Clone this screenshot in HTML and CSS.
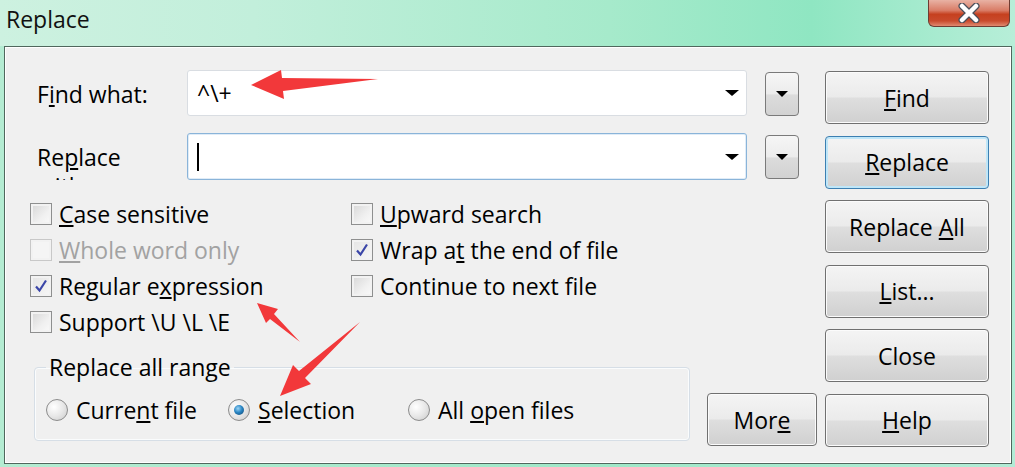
FILE: index.html
```html
<!DOCTYPE html>
<html>
<head>
<meta charset="utf-8">
<link rel="stylesheet" href="styles.css">
</head>
<body>
<div class="window">
  <div class="titlebar">
    <span class="title">Replace</span>
    <div class="close-btn">
      <svg width="30" height="20" viewBox="0 0 30 20">
        <path d="M8 3 L22 17 M22 3 L8 17" stroke="#4a4f5a" stroke-width="7" stroke-linecap="round"/>
        <path d="M8 3 L22 17 M22 3 L8 17" stroke="#ffffff" stroke-width="4.5" stroke-linecap="round"/>
      </svg>
    </div>
  </div>
  <div class="client">
    <div class="main">
      <div class="field-row">
        <label class="field-label">F<u>i</u>nd what:</label>
        <div class="combo"><span class="combo-text">^\+</span><span class="tri"></span></div>
        <div class="drop-btn"><span class="tri"></span></div>
      </div>
      <div class="field-row row2">
        <label class="field-label clip"><span class="wrap">Re<u>p</u>lace with:</span></label>
        <div class="combo focus"><span class="caret"></span><span class="tri"></span></div>
        <div class="drop-btn"><span class="tri"></span></div>
      </div>
      <div class="options">
        <div class="col">
          <div class="opt"><span class="box"></span><span><u>C</u>ase sensitive</span></div>
          <div class="opt disabled"><span class="box"></span><span><u>W</u>hole word only</span></div>
          <div class="opt"><span class="box checked"><svg width="14" height="14" viewBox="0 0 14 14"><path d="M2 7.5 L5.5 11.5 L12 1.5" fill="none" stroke="#3b46a8" stroke-width="2.2"/></svg></span><span>Regular e<u>x</u>pression</span></div>
          <div class="opt"><span class="box"></span><span>Support \U \L \E</span></div>
        </div>
        <div class="col">
          <div class="opt"><span class="box"></span><span><u>U</u>pward search</span></div>
          <div class="opt"><span class="box checked"><svg width="14" height="14" viewBox="0 0 14 14"><path d="M2 7.5 L5.5 11.5 L12 1.5" fill="none" stroke="#3b46a8" stroke-width="2.2"/></svg></span><span>Wrap a<u>t</u> the end of file</span></div>
          <div class="opt"><span class="box"></span><span>Continue to next file</span></div>
        </div>
      </div>
      <div class="bottom-row">
        <fieldset class="group">
          <legend>Replace all range</legend>
          <div class="radios">
            <div class="radio-item r1"><span class="radio"></span><span>Curre<u>n</u>t file</span></div>
            <div class="radio-item r2"><span class="radio on"></span><span><u>S</u>election</span></div>
            <div class="radio-item r3"><span class="radio"></span><span>All <u>o</u>pen files</span></div>
          </div>
        </fieldset>
        <button class="btn more">Mor<u>e</u></button>
      </div>
    </div>
    <div class="buttons">
      <button class="btn"><u>F</u>ind</button>
      <button class="btn default"><u>R</u>eplace</button>
      <button class="btn">Replace <u>A</u>ll</button>
      <button class="btn"><u>L</u>ist...</button>
      <button class="btn">Close</button>
      <button class="btn"><u>H</u>elp</button>
    </div>
  </div>
</div>
<svg class="annotations" width="1015" height="467" viewBox="0 0 1015 467">
  <polygon points="251,85 281,70 282,78 378,79 283,91 284,99" fill="#f2383a"/>
  <polygon points="257,303 278,309 274,314 300,342 270,319 266,323" fill="#f2383a"/>
  <polygon points="280,396 293,365 299,371 360,322 305,378 311,384" fill="#f2383a"/>
</svg>
</body>
</html>
```

FILE: styles.css
```css
html, body {
  margin: 0;
  padding: 0;
}
body {
  width: 1015px;
  height: 467px;
  overflow: hidden;
  position: relative;
  font-family: "Open Sans", "Noto Sans", sans-serif;
  font-size: 23px;
  color: #000;
  background: linear-gradient(90deg, #b4ecd2 0%, #9fe8c8 60%, #b2ecd6 100%);
}
.window {
  width: 1015px;
  height: 467px;
  display: flex;
  flex-direction: column;
}
.titlebar {
  height: 46px;
  display: flex;
  justify-content: space-between;
  align-items: flex-start;
  background: linear-gradient(90deg, #cdf1e0 0%, #c2efdb 25%, #a6eacb 60%, #8fe6c2 80%, #b7eed8 100%);
}
.title {
  font-size: 23px;
  line-height: 30px;
  margin: 4px 0 0 6px;
  color: #111;
}
.close-btn {
  width: 82px;
  height: 27px;
  margin-right: 5px;
  box-sizing: border-box;
  border: 1px solid #6e3c32;
  border-top: none;
  border-radius: 0 0 6px 6px;
  background: linear-gradient(180deg, #e8b2a4 0%, #d97c66 40%, #c5401f 55%, #c94a2c 80%, #e08a70 100%);
  display: flex;
  align-items: center;
  justify-content: center;
}
.client {
  flex: 1;
  margin: 0 3px 3px 4px;
  border: 1px solid #50675d;
  box-shadow: inset 0 0 0 1px #ffffff;
  background: #f0f0f0;
  display: flex;
  padding: 23px 0 0 25px;
}
.main {
  width: 787px;
  display: flex;
  flex-direction: column;
}
.field-row {
  display: flex;
  align-items: flex-start;
  height: 46px;
}
.row2 {
  margin-top: 17px;
  height: 47px;
}
.field-label {
  width: 150px;
  margin-left: 7px;
  padding-top: 10px;
  font-size: 23px;
  line-height: 28px;
  white-space: nowrap;
}
.clip {
  height: 47px;
  overflow: hidden;
  padding-top: 10px;
  box-sizing: border-box;
  white-space: normal;
}
.wrap {
  display: block;
  width: 100px;
  line-height: 29px;
}
.combo {
  width: 560px;
  height: 46px;
  box-sizing: border-box;
  background: #fff;
  border: 1px solid #d9dde2;
  border-radius: 3px;
  display: flex;
  align-items: center;
  padding: 0 7px 0 9px;
}
.combo.focus {
  height: 47px;
  border-color: #8ab4d9;
  box-shadow: inset 0 0 0 1px #e0ecf7;
}
.combo-text {
  flex: 1;
  font-size: 23px;
}
.caret {
  width: 2px;
  height: 28px;
  background: #000;
}
.combo .tri {
  margin-left: auto;
}
.tri {
  width: 0;
  height: 0;
  border-left: 7px solid transparent;
  border-right: 7px solid transparent;
  border-top: 6px solid #000;
}
.drop-btn {
  width: 34px;
  height: 44px;
  margin-left: 18px;
  margin-top: 2px;
  box-sizing: border-box;
  border: 1px solid #7a7a7a;
  border-radius: 4px;
  background: linear-gradient(180deg, #f6f6f6 0%, #ececec 50%, #dcdcdc 52%, #d2d2d2 100%);
  display: flex;
  align-items: center;
  justify-content: center;
}
.drop-btn .tri {
  border-left-width: 6px;
  border-right-width: 6px;
}
.options {
  margin-top: 16px;
  display: flex;
}
.col {
  display: flex;
  flex-direction: column;
}
.col:first-child {
  width: 321px;
}
.opt {
  height: 36px;
  display: flex;
  align-items: center;
  gap: 7px;
  font-size: 23px;
  white-space: nowrap;
}
.box {
  width: 22px;
  height: 22px;
  box-sizing: border-box;
  border: 1px solid #8e8f8f;
  background: linear-gradient(135deg, #d6d6d6 0%, #f0f0f0 60%, #fafafa 100%);
  box-shadow: inset 0 0 0 2px #f2f2f2;
  display: flex;
  align-items: center;
  justify-content: center;
}
.box.checked {
  background: linear-gradient(135deg, #e4e4e4 0%, #f7f7f7 100%);
}
.opt.disabled {
  color: #a2a2a2;
}
.opt.disabled .box {
  border-color: #c8c8c8;
  background: #f5f5f5;
}
.bottom-row {
  margin-top: 13px;
  display: flex;
  align-items: flex-end;
}
.group {
  width: 656px;
  height: 88px;
  box-sizing: border-box;
  margin: 0 17px 5px 4px;
  padding: 0 0 0 11px;
  border: 1px solid #d6dee6;
  border-radius: 4px;
  box-shadow: inset 0 0 0 1px #fafcfd;
}
.group legend {
  margin-left: 0;
  padding: 0 3px;
  font-size: 23px;
  line-height: 28px;
}
.radios {
  display: flex;
  align-items: center;
  height: 46px;
  margin-top: 6px;
}
.radio-item {
  display: flex;
  align-items: center;
  gap: 8px;
  font-size: 23px;
  white-space: nowrap;
}
.r1 { width: 182px; }
.r2 { width: 180px; }
.radio {
  width: 22px;
  height: 22px;
  box-sizing: border-box;
  border-radius: 50%;
  border: 1px solid #8c8c8c;
  background: radial-gradient(circle at 35% 35%, #ffffff 0%, #e8e8e8 50%, #c9c9c9 100%);
  display: flex;
  align-items: center;
  justify-content: center;
}
.radio.on::after {
  content: "";
  width: 10px;
  height: 10px;
  border-radius: 50%;
  background: radial-gradient(circle at 40% 35%, #9fd6f6 0%, #2a86c4 45%, #0b3e6a 100%);
}
.btn {
  font-family: "Open Sans", "Noto Sans", sans-serif;
  font-size: 23px;
  color: #000;
  height: 53px;
  box-sizing: border-box;
  border: 1px solid #707070;
  border-radius: 4px;
  background: linear-gradient(180deg, #f4f4f4 0%, #ebebeb 48%, #dedede 52%, #d0d0d0 100%);
  box-shadow: inset 0 0 0 1px #fbfbfb;
  padding: 0;
  cursor: default;
}
.more {
  width: 110px;
}
.buttons {
  margin-left: 8px;
  display: flex;
  flex-direction: column;
  gap: 11.5px;
  padding-top: 1px;
}
.buttons .btn {
  width: 164px;
}
.btn.default {
  border-color: #3c7fb1;
  box-shadow: inset 0 0 0 2px #bfe6f8;
}
.annotations {
  position: absolute;
  left: 0;
  top: 0;
  pointer-events: none;
}
```
